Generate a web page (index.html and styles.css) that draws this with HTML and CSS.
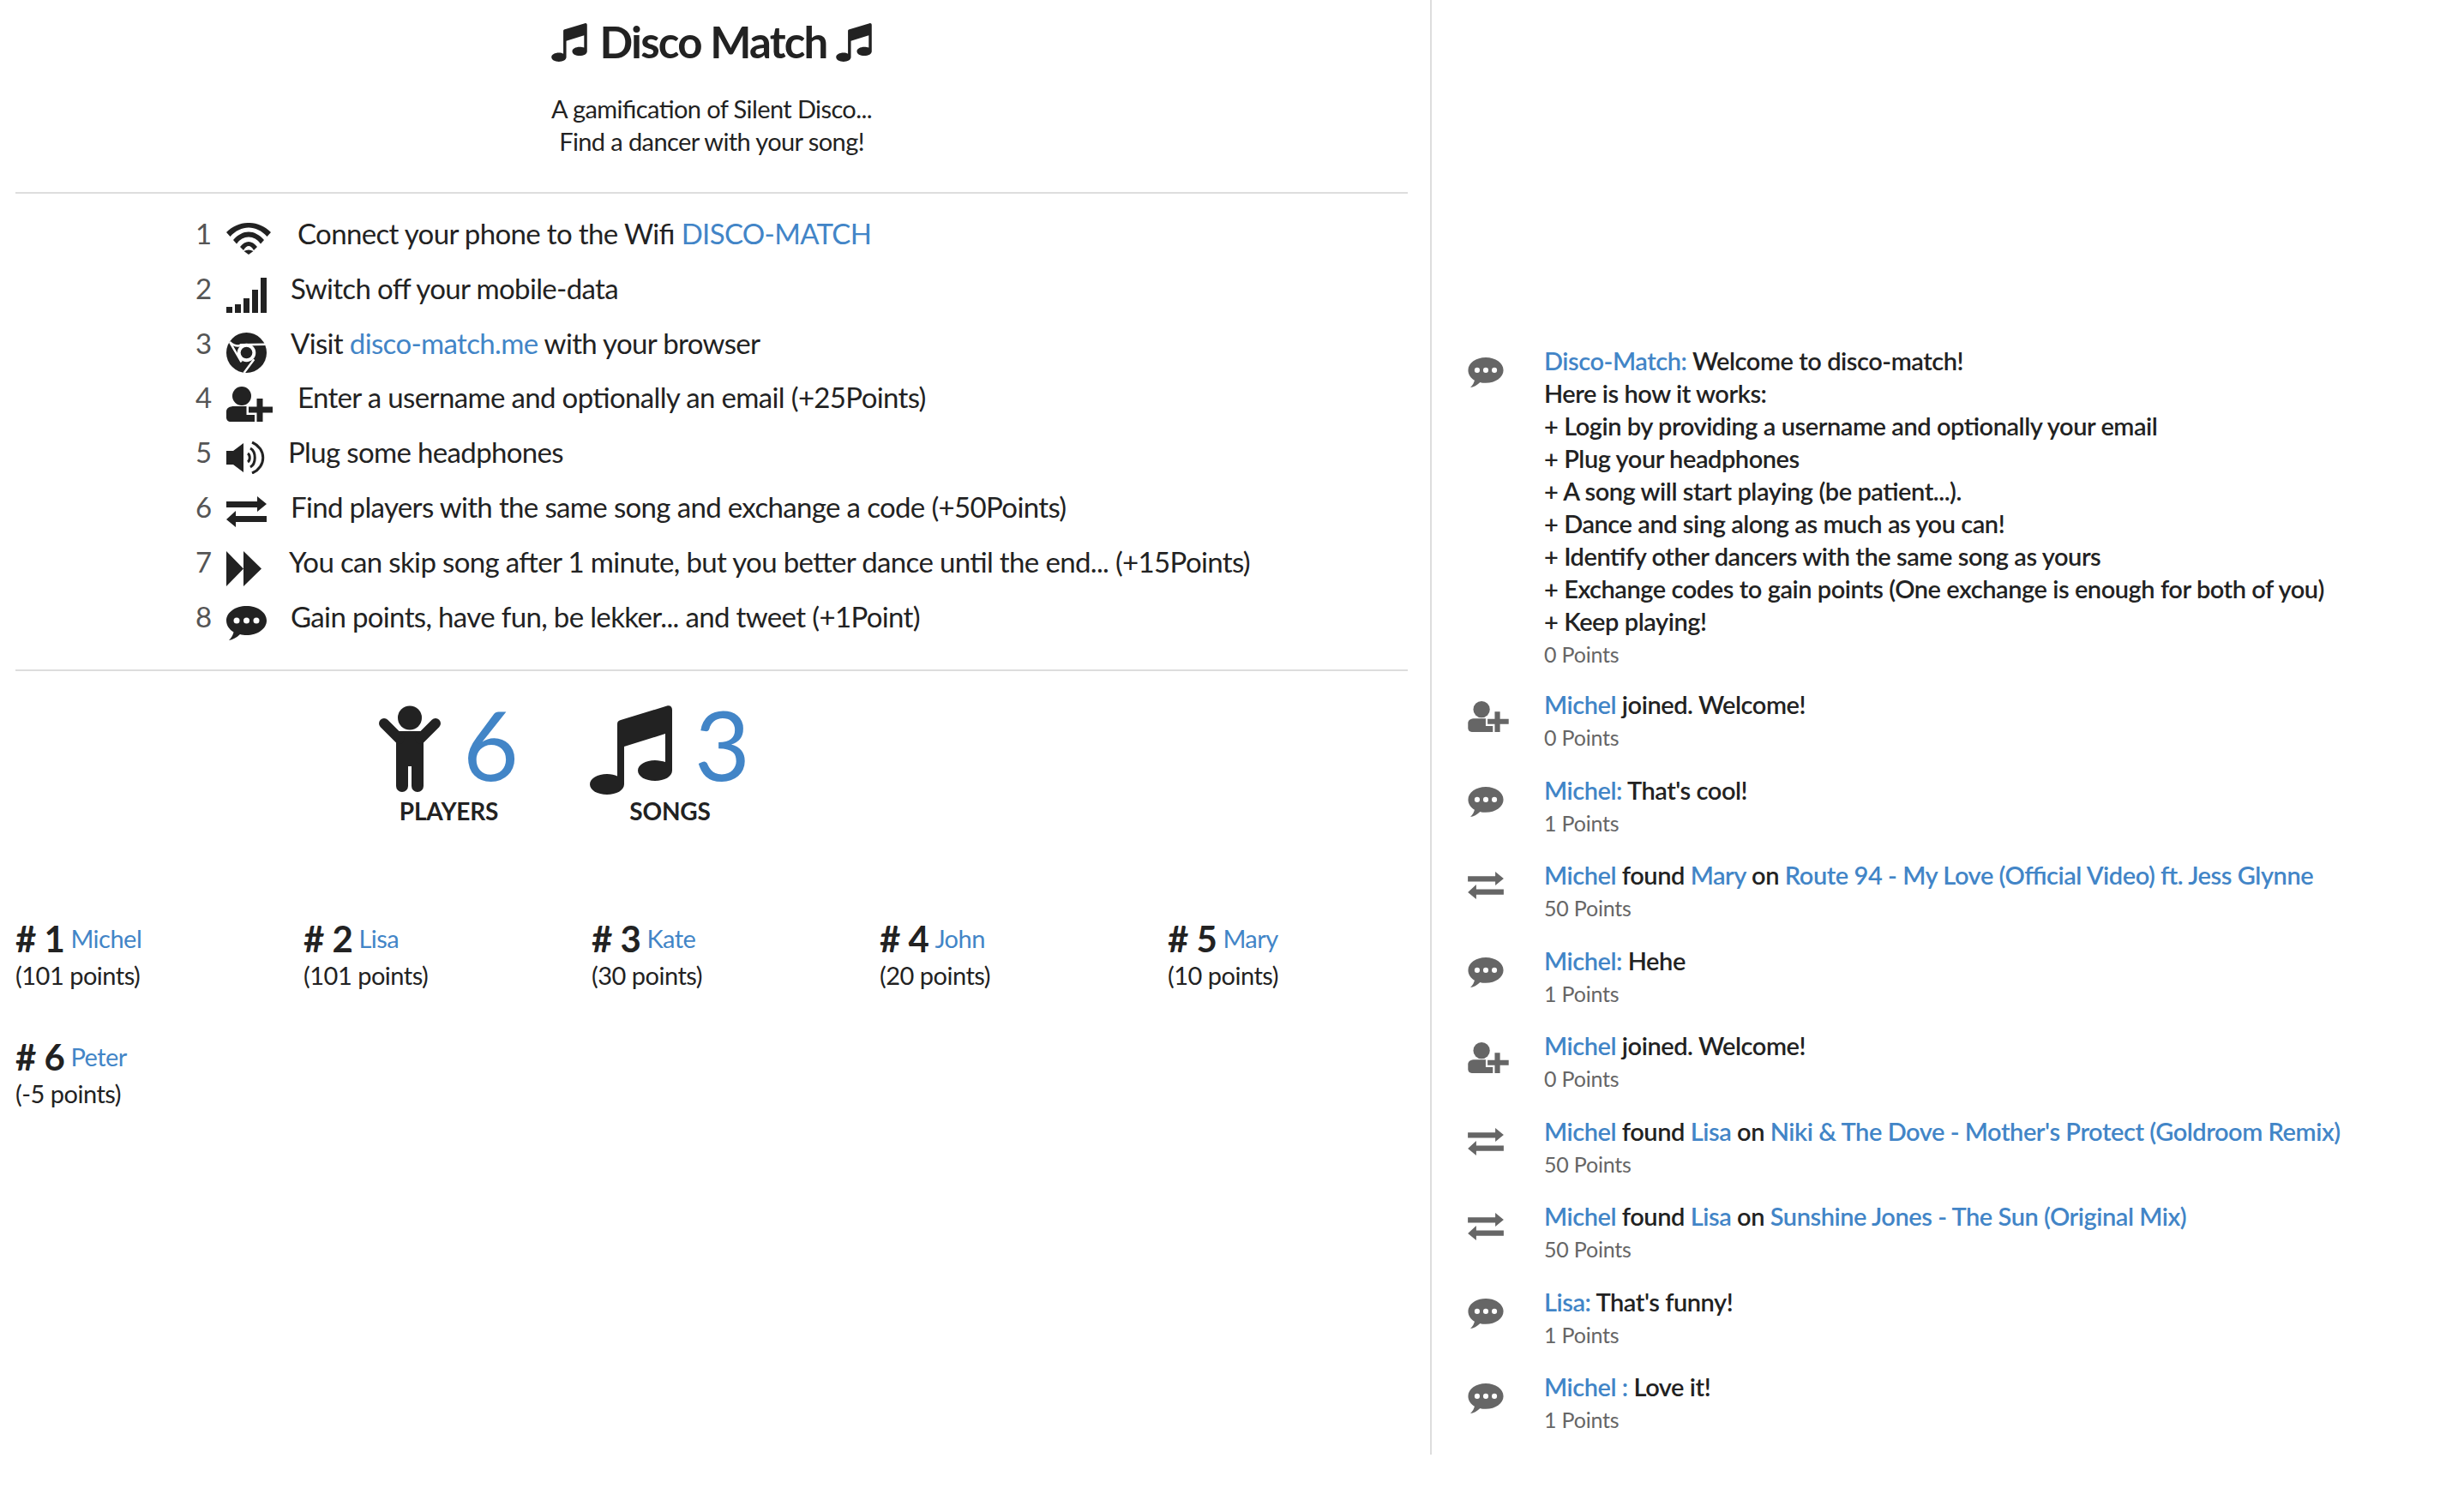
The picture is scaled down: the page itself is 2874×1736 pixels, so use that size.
FILE: index.html
```html
<!DOCTYPE html>
<html lang="en">
<head>
    <meta charset="UTF-8">
    <title>Disco Match</title>
    <link rel="stylesheet" href="styles.css">
</head>
<body>
    <svg class="defs" aria-hidden="true">
        <symbol id="i-music" viewBox="0 0 96 104"><path d="M96 5V76C96 83 87 88 76 88C65 88 56 83 56 76C56 69 65 64 76 64C80 64 85 65 88 66V33L40 48V92C40 99 31 104 20 104C9 104 0 99 0 92C0 85 9 80 20 80C25 80 29 81 32 82.5V22C32 19 33 18 36 17L90 .5C93-.5 96 1 96 5Z"/></symbol>
        <symbol id="i-wifi" viewBox="0 0 52 37"><path d="M0 11C15-3.700 37-3.700 52 11L47.500 16C35 2 17 2 4.500 16Z"/><path d="M8 20C19 7.300 33 7.300 44 20L40 24.500C33 13.800 19 13.800 12 24.500Z"/><path d="M16 28C22 20 30 20 36 28L32 32C28 25.300 24 25.300 20 32Z"/><path d="M26 37L20.500 33C24 31 28 31 31.500 33Z"/></symbol>
        <symbol id="i-signal" viewBox="0 0 47 41"><path d="M0 34h7v7H0zM10 31h7v10h-7zM20 24h7v17h-7zM30 14h7v27h-7zM40 0h7v41h-7z"/></symbol>
        <symbol id="i-chrome" viewBox="0 0 48 48"><circle cx="24" cy="24" r="24"/><path class="cut" d="M16 14.500L47 14M4 11L18 35M33 32L21 48M4 11C9 16 13 17 18 15"/><circle class="hole" cx="24" cy="24" r="11"/><circle cx="24" cy="24" r="7"/></symbol>
        <symbol id="i-user" viewBox="0 0 54 41"><circle cx="18" cy="11" r="11"/><path d="M0 29C0 25 4 23 9 23H29C33 23 37 25 37 29V41H5C2 41 0 39 0 36Z"/><path class="halo" d="M35.500 14H42.500V23.500H54V30.500H42.500V41H35.500V30.500H26V23.500H35.500Z"/><path d="M35.500 14H42.500V23.500H54V30.500H42.500V41H35.500V30.500H26V23.500H35.500Z"/></symbol>
        <symbol id="i-speaker" viewBox="0 0 45 38"><path d="M0 11H8L20 2V36L8 27H0Z"/><path class="arc" d="M25 14C28 16 28 22 25 24M28 8C35 12 35 26 28 30M30 1C47 8 47 30 30 37"/></symbol>
        <symbol id="i-exchange" viewBox="0 0 47 36"><path d="M0 6H36V0L47 9L36 18V13H0ZM47 23V30H11V36L0 27L11 17V23Z"/></symbol>
        <symbol id="i-forward" viewBox="0 0 41 41"><path d="M0 0L20 20.5L0 41ZM20 0L41 20.5L20 41Z"/></symbol>
        <symbol id="i-comment" viewBox="0 0 47 40"><path d="M23.500 0C36.500 0 47 7.500 47 17C47 26.500 36.500 34 23.500 34C21 34 18 33.700 16 33C12 37 7 39.500 3 40C6 37 8 33.500 8.500 30.500C3.500 27.500 0 22.500 0 17C0 7.500 10.500 0 23.500 0Z"/><circle class="hole" cx="12" cy="17" r="3.500"/><circle class="hole" cx="23.500" cy="17" r="3.500"/><circle class="hole" cx="35" cy="17" r="3.500"/></symbol>
        <symbol id="i-person" viewBox="0 0 72 102"><circle cx="36" cy="14.500" r="14"/><path d="M20 30H52V94A7 7 0 0 1 38 94V71H34V94A7 7 0 0 1 20 94Z"/><path class="limb" d="M6 21L24 39M66 21L48 39"/></symbol>
    </svg>

    <div class="page">
        <div class="game">
            <header class="intro">
                <h1><svg class="note note-left"><use href="#i-music"/></svg> Disco Match <svg class="note"><use href="#i-music"/></svg></h1>
                <p>A gamification of Silent Disco...<br>Find a dancer with your song!</p>
            </header>
            <hr>
            <ol class="steps">
                <li><span class="num">1</span><svg class="ic ic-wifi"><use href="#i-wifi"/></svg><span class="txt">Connect your phone to the Wifi <a>DISCO-MATCH</a></span></li>
                <li><span class="num">2</span><svg class="ic ic-signal"><use href="#i-signal"/></svg><span class="txt">Switch off your mobile-data</span></li>
                <li><span class="num">3</span><svg class="ic ic-chrome"><use href="#i-chrome"/></svg><span class="txt">Visit <a>disco-match.me</a> with your browser</span></li>
                <li><span class="num">4</span><svg class="ic ic-user"><use href="#i-user"/></svg><span class="txt">Enter a username and optionally an email (+25Points)</span></li>
                <li><span class="num">5</span><svg class="ic ic-speaker"><use href="#i-speaker"/></svg><span class="txt">Plug some headphones</span></li>
                <li><span class="num">6</span><svg class="ic ic-exchange"><use href="#i-exchange"/></svg><span class="txt">Find players with the same song and exchange a code (+50Points)</span></li>
                <li><span class="num">7</span><svg class="ic ic-forward"><use href="#i-forward"/></svg><span class="txt">You can skip song after 1 minute, but you better dance until the end... (+15Points)</span></li>
                <li><span class="num">8</span><svg class="ic ic-comment"><use href="#i-comment"/></svg><span class="txt">Gain points, have fun, be lekker... and tweet (+1Point)</span></li>
            </ol>
            <hr>
            <div class="stats">
                <div class="stat stat-players">
                    <div class="stat-top"><svg class="person"><use href="#i-person"/></svg><span class="count">6</span></div>
                    <div class="stat-label">PLAYERS</div>
                </div>
                <div class="stat stat-songs">
                    <div class="stat-top"><svg class="bignote"><use href="#i-music"/></svg><span class="count">3</span></div>
                    <div class="stat-label">SONGS</div>
                </div>
            </div>
            <div class="ranks">
                <div class="rank"><b># 1</b> <a>Michel</a><br>(101 points)</div>
                <div class="rank"><b># 2</b> <a>Lisa</a><br>(101 points)</div>
                <div class="rank"><b># 3</b> <a>Kate</a><br>(30 points)</div>
                <div class="rank"><b># 4</b> <a>John</a><br>(20 points)</div>
                <div class="rank"><b># 5</b> <a>Mary</a><br>(10 points)</div>
                <div class="rank"><b># 6</b> <a>Peter</a><br>(-5 points)</div>
            </div>
        </div>

        <div class="feed">
            <div class="msg msg-intro">
                <svg class="msg-ic ic-comment"><use href="#i-comment"/></svg>
                <div class="msg-body">
                    <a>Disco-Match:</a> Welcome to disco-match!<br>
                    Here is how it works:<br>
                    + Login by providing a username and optionally your email<br>
                    + Plug your headphones<br>
                    + A song will start playing (be patient...).<br>
                    + Dance and sing along as much as you can!<br>
                    + Identify other dancers with the same song as yours<br>
                    + Exchange codes to gain points (One exchange is enough for both of you)<br>
                    + Keep playing!
                    <div class="pts">0 Points</div>
                </div>
            </div>
            <div class="msg">
                <svg class="msg-ic ic-user"><use href="#i-user"/></svg>
                <div class="msg-body"><a>Michel</a> joined. Welcome!<div class="pts">0 Points</div></div>
            </div>
            <div class="msg">
                <svg class="msg-ic ic-comment"><use href="#i-comment"/></svg>
                <div class="msg-body"><a>Michel:</a> That's cool!<div class="pts">1 Points</div></div>
            </div>
            <div class="msg">
                <svg class="msg-ic ic-exchange"><use href="#i-exchange"/></svg>
                <div class="msg-body"><a>Michel</a> found <a>Mary</a> on <a>Route 94 - My Love (Official Video) ft. Jess Glynne</a><div class="pts">50 Points</div></div>
            </div>
            <div class="msg">
                <svg class="msg-ic ic-comment"><use href="#i-comment"/></svg>
                <div class="msg-body"><a>Michel:</a> Hehe<div class="pts">1 Points</div></div>
            </div>
            <div class="msg">
                <svg class="msg-ic ic-user"><use href="#i-user"/></svg>
                <div class="msg-body"><a>Michel</a> joined. Welcome!<div class="pts">0 Points</div></div>
            </div>
            <div class="msg">
                <svg class="msg-ic ic-exchange"><use href="#i-exchange"/></svg>
                <div class="msg-body"><a>Michel</a> found <a>Lisa</a> on <a>Niki &amp; The Dove - Mother's Protect (Goldroom Remix)</a><div class="pts">50 Points</div></div>
            </div>
            <div class="msg">
                <svg class="msg-ic ic-exchange"><use href="#i-exchange"/></svg>
                <div class="msg-body"><a>Michel</a> found <a>Lisa</a> on <a>Sunshine Jones - The Sun (Original Mix)</a><div class="pts">50 Points</div></div>
            </div>
            <div class="msg">
                <svg class="msg-ic ic-comment"><use href="#i-comment"/></svg>
                <div class="msg-body"><a>Lisa:</a> That's funny!<div class="pts">1 Points</div></div>
            </div>
            <div class="msg">
                <svg class="msg-ic ic-comment"><use href="#i-comment"/></svg>
                <div class="msg-body"><a>Michel :</a> Love it!<div class="pts">1 Points</div></div>
            </div>
        </div>
    </div>
</body>
</html>
```

FILE: styles.css
```css
html, body {
    margin: 0;
    background: #fff;
}
body {
    font-family: Lato, "Open Sans", sans-serif;
    font-feature-settings: "liga" 1;
    color: #222;
    height: 1736px;
    overflow: hidden;
}
a {
    color: #4285c7;
}
.defs {
    width: 0;
    height: 0;
    display: block;
}
.defs .cut {
    fill: none;
    stroke: #fff;
    stroke-width: 2.5;
}
.defs .hole {
    fill: #fff;
}
.defs .halo {
    fill: #fff;
    stroke: #fff;
    stroke-width: 5;
}
.defs .arc {
    fill: none;
    stroke: currentColor;
    stroke-width: 3;
}
.defs .limb {
    fill: none;
    stroke: currentColor;
    stroke-width: 12;
    stroke-linecap: round;
}
svg {
    fill: currentColor;
}
.page {
    display: flex;
    height: 1697px;
}
.game {
    width: 1670px;
    box-sizing: border-box;
    padding: 0 26px 0 18px;
    border-right: 2px solid #ddd;
    flex: none;
}
.intro {
    text-align: center;
    height: 224px;
    overflow: hidden;
}
.intro h1 {
    font-size: 51px;
    font-weight: 700;
    letter-spacing: -1.800px;
    line-height: 62px;
    margin: 18px 0 28px;
}
.note {
    width: 42px;
    height: 45px;
    vertical-align: -4px;
}
.note-left {
    margin-right: 4px;
}
.intro p {
    font-size: 29px;
    letter-spacing: -.6px;
    line-height: 38px;
    margin: 0;
}
hr {
    border: 0;
    border-top: 2px solid #ddd;
    margin: 0;
}
.steps {
    list-style: none;
    margin: 0;
    padding: 22px 0 0 210px;
    height: 555px;
    box-sizing: border-box;
}
.steps li {
    display: flex;
    align-items: flex-start;
    height: 63.800px;
    font-size: 33px;
    letter-spacing: -.65px;
    line-height: 48px;
}
.num {
    width: 36px;
    color: #555;
    flex: none;
}
.ic {
    flex: none;
    margin-top: 12px;
    margin-right: 28px;
}
.ic-wifi { width: 52px; height: 37px; }
.ic-signal { width: 47px; height: 41px; }
.ic-chrome { width: 47px; height: 47px; }
.ic-user { width: 54px; height: 41px; }
.ic-speaker { width: 45px; height: 38px; }
.ic-exchange { width: 47px; height: 36px; }
.ic-forward { width: 41px; height: 41px; }
.ic-comment { width: 47px; height: 40px; }
.steps .ic-wifi { margin-right: 31px; }
.steps .ic-user { margin-right: 29px; }
.steps .ic-speaker { margin-right: 27px; }
.steps .ic-forward { margin-right: 32px; }
.stats {
    display: flex;
    gap: 83px;
    padding: 40px 0 0 424px;
    height: 250px;
    box-sizing: border-box;
}
.stat {
    display: flex;
    flex-direction: column;
}
.stat-top {
    display: flex;
    align-items: flex-start;
    height: 104px;
}
.person {
    width: 72px;
    height: 102px;
}
.bignote {
    width: 96px;
    height: 104px;
}
.count {
    color: #4285c7;
    font-size: 112px;
    line-height: 104px;
    margin-left: 26px;
    margin-top: -7px;
}
.stat-label {
    font-size: 28px;
    font-weight: 700;
    letter-spacing: -.2px;
    line-height: 38px;
    text-align: center;
}
.ranks {
    display: grid;
    grid-template-columns: repeat(5, 336px);
    grid-auto-rows: 138px;
    font-size: 29px;
    letter-spacing: -.5px;
    line-height: 38px;
    padding-top: 43px;
}
.rank a {
    vertical-align: 5px;
}
.rank b {
    font-size: 42px;
    font-weight: 700;
}
.feed {
    flex: 1;
    padding: 402px 0 0 42px;
    font-size: 29px;
    letter-spacing: -.45px;
    line-height: 38px;
    font-weight: 600;
}
.msg {
    display: grid;
    grid-template-columns: 89px 1fr;
    margin-bottom: 22.500px;
}
.msg-intro {
    margin-bottom: 20px;
}
.msg-ic {
    color: #666;
    margin-top: 15px;
}
.msg-ic.ic-comment { width: 42px; height: 35px; }
.msg-ic.ic-user { width: 48px; height: 36px; }
.msg-ic.ic-exchange { width: 42px; height: 32px; }
.pts {
    color: #666;
    font-size: 25px;
    font-weight: 400;
    letter-spacing: -.2px;
    line-height: 39px;
}
```
